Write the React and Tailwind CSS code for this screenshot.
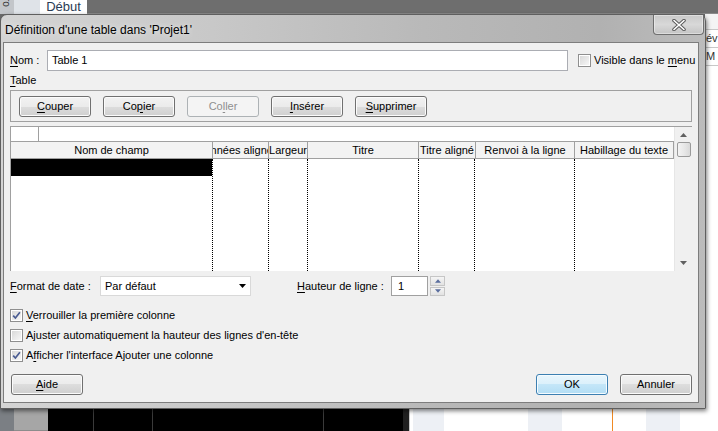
import React from "react";

const U = ({ children }) => <span className="underline underline-offset-[2px]">{children}</span>;

function Btn({ children, kind }) {
  if (kind === "disabled")
    return (
      <div className="h-[21px] w-[72px] shrink-0 rounded-[3px] border border-[#adb2b5] bg-[#f4f4f4] text-[#8f8f8f] flex items-center justify-center">
        {children}
      </div>
    );
  if (kind === "primary")
    return (
      <div className="h-[21px] w-[72px] shrink-0 rounded-[3px] border border-[#3c7fb1] bg-[linear-gradient(#e8f5fc,#dbf0fb_50%,#c4e6f8_50%,#b2ddf4)] shadow-[inset_0_0_0_1px_#f4fbff] flex items-center justify-center">
        {children}
      </div>
    );
  return (
    <div className="h-[21px] w-[72px] shrink-0 rounded-[3px] border border-[#707070] bg-[linear-gradient(#f2f2f2,#ebebeb_50%,#dddddd_50%,#cfcfcf)] shadow-[inset_0_0_0_1px_#fbfbfb] flex items-center justify-center">
      {children}
    </div>
  );
}

function Check({ checked }) {
  return (
    <div className="w-[13px] h-[13px] border border-[#8f8f8f] bg-white p-[1px] shrink-0">
      <div className="w-full h-full bg-[linear-gradient(135deg,#d9d9d9,#f6f6f6)] relative">
        {checked && (
          <svg viewBox="0 0 9 9" className="absolute inset-0 w-[9px] h-[9px]">
            <path d="M1.2 4.6 L3.4 7 L7.9 1.2" fill="none" stroke="#4a5c92" strokeWidth="1.7" />
          </svg>
        )}
      </div>
    </div>
  );
}

function HeadCell({ w, children }) {
  return (
    <div className={`${w} h-full border-r border-[#a0a0a0] flex items-center justify-center overflow-hidden shrink-0`}>
      <span className="whitespace-nowrap shrink-0">{children}</span>
    </div>
  );
}

export default function App() {
  return (
    <div className="relative w-[718px] h-[431px] overflow-hidden bg-[#6b6b6b] font-['Liberation_Sans',Arial,sans-serif] text-[11px] text-black leading-none whitespace-nowrap">
      {/* background application */}
      <div className="flex flex-col w-full h-full">
        <div className="h-[14px] flex shrink-0">
          <div className="w-[14px] bg-[#c3c6ca] overflow-hidden relative">
            <span className="absolute left-[1px] top-[-2px] text-[10px] text-[#333] [writing-mode:vertical-rl]">ro</span>
          </div>
          <div className="w-[26px] bg-[#dfe3e8]" />
          <div className="w-[47px] bg-white flex justify-center items-end overflow-hidden">
            <span className="text-[13px] leading-[13px] text-[#2a3b55] mb-[1px]">Début</span>
          </div>
          <div className="flex-1 bg-[#6e6e6e] border-b border-[#8a8a8a]" />
        </div>
        <div className="flex-1 flex">
          <div className="flex-1" />
          <div className="w-[13px] bg-white flex flex-col text-[11px] text-[#333] overflow-hidden">
            <div className="h-[16px] bg-[#f4f4f4] border-b border-[#c8c8c8]" />
            <div className="h-[18px] border-b border-[#c8c8c8] flex items-center pl-[1px]">év</div>
            <div className="h-[18px] border-b border-[#c8c8c8] flex items-center pl-[1px]">M</div>
            <div className="flex-1" />
          </div>
        </div>
        <div className="h-[23px] flex shrink-0">
          <div className="w-[14px] bg-[#7b7f84]" />
          <div className="w-[34px] bg-[#a6a6a6] border-b border-[#8c8c8c]" />
          <div className="w-[355px] bg-black flex">
            <div className="w-[46px] border-r border-[#3a3a3a]" />
            <div className="w-[59px] border-r border-[#3a3a3a]" />
            <div className="w-[171px] border-r border-[#3a3a3a]" />
            <div className="flex-1" />
          </div>
          <div className="w-[6px] bg-[#202020]" />
          <div className="flex-1 bg-white flex border-l border-[#c8c8c8]">
            <div className="w-[3px]" />
            <div className="w-[31px] bg-[#edf0f5]" />
            <div className="w-[84px]" />
            <div className="w-[34px] bg-[#edf0f5]" />
            <div className="w-[50px]" />
            <div className="w-[1px] bg-[#f08a24]" />
            <div className="w-[33px]" />
            <div className="w-[34px] bg-[#edf0f5]" />
            <div className="flex-1" />
          </div>
        </div>
      </div>

      {/* dialog window */}
      <div className="absolute left-0 top-[14px] w-[706px] h-[395px] rounded-t-[7px] border border-[#5f5f5f] bg-[linear-gradient(90deg,#d4d4d4,#c8c8c8_30%,#b9b9b9_60%,#b1b1b1_85%,#bcbcbc)] shadow-[1px_2px_4px_rgba(0,0,0,0.5)] flex flex-col">
        {/* title bar */}
        <div className="h-[27px] flex items-start shrink-0">
          <span className="ml-[4px] mt-[9px] text-[12px] text-black [text-shadow:0_0_6px_rgba(255,255,255,0.8)]">
            Définition d'une table dans 'Projet1'
          </span>
          <div className="ml-auto mr-[1px] w-[51px] h-[20px] rounded-b-[4px] border border-t-0 border-[#6f6f6f] bg-[linear-gradient(#c9c9c9,#d8d8d8_50%,#c4c4c4)] shadow-[inset_0_0_0_1px_rgba(255,255,255,0.4)] flex items-center justify-center">
            <svg viewBox="0 0 14 12" className="w-[14px] h-[12px]">
              <path d="M2 1.5 L12 10.5 M12 1.5 L2 10.5" stroke="#5a5a5a" strokeWidth="3.6" strokeLinecap="round" />
              <path d="M2 1.5 L12 10.5 M12 1.5 L2 10.5" stroke="#ffffff" strokeWidth="1.6" strokeLinecap="round" />
            </svg>
          </div>
        </div>

        {/* client area */}
        <div className="ml-[2px] mr-[6px] h-[361px] border border-[#7d7d7d] bg-[#f0f0f0] px-[6px] pt-[7px] flex flex-col">
          {/* Nom row */}
          <div className="h-[21px] flex items-center">
            <span className="w-[37px] shrink-0"><U>N</U>om :</span>
            <div className="w-[521px] h-[21px] shrink-0 border border-[#abadb3] bg-white flex items-center pl-[4px]">Table 1</div>
            <div className="ml-[10px] flex items-center gap-[3px]">
              <Check />
              <span>Visible dans le <U>m</U>enu</span>
            </div>
          </div>
          {/* Table label */}
          <div className="h-[19px] flex items-center"><span><U>T</U>able</span></div>
          {/* group box with buttons */}
          <div className="h-[32px] border border-[#a0a0a0] flex items-center gap-[12px] pl-[8px]">
            <Btn><span><U>C</U>ouper</span></Btn>
            <Btn><span>Co<U>p</U>ier</span></Btn>
            <Btn kind="disabled"><span>Co<U>l</U>ler</span></Btn>
            <Btn><span><U>I</U>nsérer</span></Btn>
            <Btn><span><U>S</U>upprimer</span></Btn>
          </div>
          {/* grid */}
          <div className="mt-[4px] h-[145px] border-l border-t border-[#a0a0a0] bg-white flex">
            <div className="flex-1 flex flex-col">
              <div className="h-[15px] flex border-b border-[#a0a0a0]">
                <div className="w-[28px] border-r border-[#a0a0a0]" />
                <div className="flex-1" />
              </div>
              <div className="h-[17px] flex bg-[#f3f3f3] border-b border-[#a0a0a0] shrink-0">
                <HeadCell w="w-[202px]">Nom de champ</HeadCell>
                <HeadCell w="w-[56px]">Données alignées</HeadCell>
                <HeadCell w="w-[39px]">Largeur</HeadCell>
                <HeadCell w="w-[111px]">Titre</HeadCell>
                <HeadCell w="w-[57px]">Titre aligné</HeadCell>
                <HeadCell w="w-[99px]">Renvoi à la ligne</HeadCell>
                <HeadCell w="w-[99px]">Habillage du texte</HeadCell>
              </div>
              <div className="flex-1 flex">
                <div className="w-[201px] flex flex-col">
                  <div className="h-[17px] bg-black" />
                </div>
                <div className="w-[56px] border-l border-dotted border-black" />
                <div className="w-[39px] border-l border-dotted border-black" />
                <div className="w-[111px] border-l border-dotted border-black" />
                <div className="w-[56px] border-l border-dotted border-black" />
                <div className="w-[100px] border-l border-dotted border-black" />
                <div className="flex-1 border-l border-dotted border-black" />
              </div>
            </div>
            {/* scrollbar */}
            <div className="w-[18px] bg-[#f0f0f0] border-l border-[#e6e6e6] flex flex-col items-center">
              <div className="h-[15px] flex items-center justify-center">
                <svg viewBox="0 0 7 4" className="w-[7px] h-[4px]"><path d="M3.5 0 L7 4 L0 4 Z" fill="#606060" /></svg>
              </div>
              <div className="w-[14px] h-[15px] rounded-[2px] border border-[#9a9a9a] bg-[linear-gradient(90deg,#f3f3f3,#e8e8e8_50%,#d9d9d9)]" />
              <div className="flex-1" />
              <div className="h-[16px] flex items-center justify-center">
                <svg viewBox="0 0 7 4" className="w-[7px] h-[4px]"><path d="M0 0 L7 0 L3.5 4 Z" fill="#606060" /></svg>
              </div>
            </div>
          </div>
          {/* format row */}
          <div className="mt-[5px] h-[20px] flex items-center">
            <span className="w-[90px] shrink-0"><U>F</U>ormat de date :</span>
            <div className="w-[151px] h-[20px] shrink-0 border border-[#d9d9d9] bg-white flex items-center pl-[4px] pr-[4px]">
              <span>Par défaut</span>
              <svg viewBox="0 0 7 4" className="ml-auto w-[7px] h-[4px]"><path d="M0 0 L7 0 L3.5 4 Z" fill="#000" /></svg>
            </div>
            <span className="ml-[46px] w-[94px] shrink-0"><U>H</U>auteur de ligne :</span>
            <div className="w-[37px] h-[20px] shrink-0 border border-[#a0a0a0] bg-white flex items-center pl-[6px]">1</div>
            <div className="ml-[2px] w-[15px] h-[20px] flex flex-col gap-[1px]">
              <div className="flex-1 border border-[#c6c6c6] bg-[linear-gradient(#f5f5f5,#e2e2e2)] flex items-center justify-center">
                <svg viewBox="0 0 7 4" className="w-[6px] h-[4px]"><path d="M3.5 0 L7 4 L0 4 Z" fill="#5b6e9e" /></svg>
              </div>
              <div className="flex-1 border border-[#c6c6c6] bg-[linear-gradient(#f5f5f5,#e2e2e2)] flex items-center justify-center">
                <svg viewBox="0 0 7 4" className="w-[6px] h-[4px]"><path d="M0 0 L7 0 L3.5 4 Z" fill="#5b6e9e" /></svg>
              </div>
            </div>
          </div>
          {/* checkboxes */}
          <div className="mt-[9px] flex flex-col">
            <div className="h-[20px] flex items-center gap-[3px]"><Check checked /><span><U>V</U>errouiller la première colonne</span></div>
            <div className="h-[20px] flex items-center gap-[3px]"><Check /><span>A<U>j</U>uster automatiquement la hauteur des lignes d'en-tête</span></div>
            <div className="h-[20px] flex items-center gap-[3px]"><Check checked /><span>A<U>f</U>ficher l'interface Ajouter une colonne</span></div>
          </div>
          {/* bottom buttons */}
          <div className="mt-[9px] flex items-center pl-[1px]">
            <Btn><span><U>A</U>ide</span></Btn>
            <div className="flex-1" />
            <Btn kind="primary"><span>OK</span></Btn>
            <div className="w-[12px]" />
            <Btn><span>Annuler</span></Btn>
          </div>
        </div>
      </div>
    </div>
  );
}
